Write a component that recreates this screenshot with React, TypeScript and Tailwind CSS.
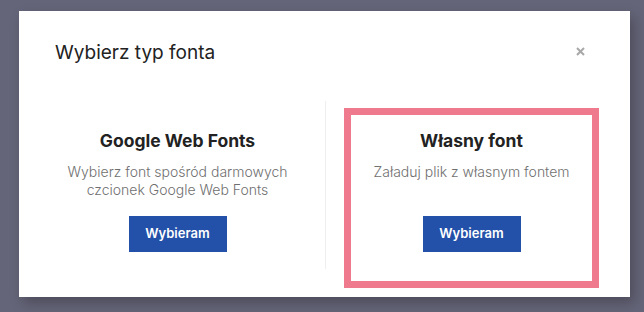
import React from "react";

const font = { fontFamily: "Inter, 'Noto Sans', sans-serif" };

function FontOption({
  title,
  lines,
  selected,
}: {
  title: string;
  lines: string[];
  selected?: boolean;
}) {
  return (
    <div
      className={
        "flex h-[180px] w-[255px] flex-col items-center border-[7px] pt-[14px] " +
        (selected ? "border-[#ef7a8d]" : "border-transparent")
      }
    >
      <h3 className="text-[17.5px] leading-[24px] font-bold text-[#222]">{title}</h3>
      <p className="mt-[10px] text-center text-[14px] leading-[18px] font-light text-[#6f6f6f]">
        {lines.map((l, i) => (
          <span key={i} className="block">
            {l}
          </span>
        ))}
      </p>
      <button className="mt-auto mb-[29px] h-[36px] w-[98px] bg-[#2350a8] text-[13px] font-semibold text-white">
        Wybieram
      </button>
    </div>
  );
}

export default function App() {
  return (
    <div className="h-[312px] w-[644px] overflow-hidden bg-[#656579] pt-[11px] pl-[19px]" style={font}>
      <div className="h-[286px] w-[611px] bg-white shadow-[4px_6px_12px_rgba(0,0,0,0.25)]">
        <div className="flex items-start justify-between pt-[28px] pr-[45px] pl-[36px]">
          <h2 className="text-[19px] leading-[28px] text-[#222]">Wybierz typ fonta</h2>
          <button className="mt-[8px] text-[#a8a8a8]" aria-label="Zamknij">
            <svg width="9" height="9" viewBox="0 0 9 9">
              <path d="M1 1L8 8M8 1L1 8" stroke="currentColor" strokeWidth="2" />
            </svg>
          </button>
        </div>
        <div className="mt-[41px] flex items-start">
          <div className="ml-[31px]">
            <FontOption
              title="Google Web Fonts"
              lines={["Wybierz font spośród darmowych", "czcionek Google Web Fonts"]}
            />
          </div>
          <div className="mt-[-7px] ml-[20px] h-[168px] w-px bg-[#eeeeee]" />
          <div className="ml-[18px]">
            <FontOption title="Własny font" lines={["Załaduj plik z własnym fontem"]} selected />
          </div>
        </div>
      </div>
    </div>
  );
}
